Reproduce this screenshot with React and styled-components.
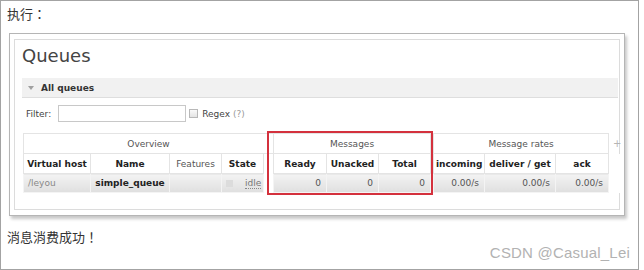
import styled, { createGlobalStyle } from 'styled-components';

const Global = createGlobalStyle`
  body {
    margin: 0;
    background: #fff;
  }
`

const Page = styled.div`
  position: relative;
  box-sizing: border-box;
  width: 639px;
  height: 270px;
  border: 1px solid #a3a3a3;
  padding: 3px 0 0 6px;
  font-family: "Noto Sans CJK TC", "Noto Sans CJK SC", sans-serif;
`

const Note = styled.p`
  margin: ${p => p.top || 0}px 0 0;
  font-size: 13px;
  line-height: 20px;
  color: #333;
`

const Shot = styled.div`
  box-sizing: border-box;
  width: 616px;
  margin: 9px 0 0 2px;
  padding: 5px 4px;
  border: 1px solid #b5b5b5;
  box-shadow: 2px 3px 3px rgba(0, 0, 0, 0.22);
  background: #fff;
`

const Inner = styled.div`
  position: relative;
  box-sizing: border-box;
  height: 171px;
  border: 1px solid #dcdcdc;
  padding: 5px 1px 0 7px;
  font-family: "DejaVu Sans", Verdana, sans-serif;
`

const Title = styled.h1`
  margin: 0;
  font-size: 18px;
  font-weight: normal;
  line-height: 22px;
  color: #444;
`

const Section = styled.div`
  display: flex;
  align-items: center;
  height: 19px;
  margin-top: 11px;
  padding-left: 6px;
  background: #f1f1f1;
  border-bottom: 1px solid #dedede;
  font-size: 9px;
  font-weight: bold;
  color: #333;
`

const Arrow = styled.span`
  width: 0;
  height: 0;
  margin-right: 7px;
  border-left: 3.5px solid transparent;
  border-right: 3.5px solid transparent;
  border-top: 4px solid #a0a0a0;
`

const FilterRow = styled.div`
  display: flex;
  align-items: center;
  height: 17px;
  margin-top: 7px;
  padding-left: 4px;
  font-size: 9px;
  color: #444;
`

const Input = styled.div`
  box-sizing: border-box;
  width: 128px;
  height: 17px;
  margin-left: 7px;
  border: 1px solid #c8c8c8;
  background: #fff;
`

const Check = styled.span`
  box-sizing: border-box;
  width: 9px;
  height: 9px;
  margin: 0 4px 0 3px;
  border: 1px solid #b8b8b8;
  background: linear-gradient(#fafafa, #e4e4e4);
`

const Help = styled.span`
  margin-left: 3px;
  color: #999;
`

const Table = styled.table`
  margin: 11px 0 0 1px;
  table-layout: fixed;
  width: 597px;
  border-collapse: collapse;
  font-size: 9px;
`

const Group = styled.th`
  height: 19px;
  padding: 0;
  border: 1px solid #e4e4e4;
  font-weight: normal;
  color: #555;
  background: #fff;
`

const Head = styled.th`
  height: 19px;
  padding: 0 2px;
  border: 1px solid #e4e4e4;
  font-weight: ${p => (p.plain ? 'normal' : 'bold')};
  color: ${p => (p.plain ? '#555' : '#222')};
  background: #fff;
  white-space: nowrap;
  overflow: hidden;
`

const Gap = styled.td`
  padding: 0;
  border: none;
  background: #fff;
`

const Plus = styled.th`
  padding: 0 0 0 4px;
  border: none;
  font-weight: normal;
  font-size: 10px;
  color: #b5b5b5;
  text-align: left;
`

const Cell = styled.td`
  height: 18px;
  padding: 0 ${p => (p.tight ? 0 : 5)}px 0 ${p => (p.tight ? 0 : 4)}px;
  border: 1px solid #f4f4f4;
  background: linear-gradient(#f3f3f3, #dfdfdf);
  text-align: ${p => p.align || 'left'};
  font-weight: ${p => (p.bold ? 'bold' : 'normal')};
  color: ${p => p.color || '#555'};
  white-space: nowrap;
  overflow: hidden;
`

const StateDot = styled.span`
  display: inline-block;
  width: 7px;
  height: 7px;
  margin-right: 12px;
  vertical-align: -1px;
  background: #dcdcdc;
`

const Idle = styled.span`
  color: #777;
  border-bottom: 1px dotted #888;
`

const Highlight = styled.div`
  position: absolute;
  left: 252px;
  top: 91px;
  width: 166px;
  height: 64px;
  box-sizing: border-box;
  border: 2px solid #d4313d;
  pointer-events: none;
`

const Watermark = styled.span`
  position: absolute;
  right: 8px;
  bottom: 8px;
  font-family: "Liberation Sans", Arial, sans-serif;
  font-size: 15px;
  letter-spacing: 0.2px;
  color: #b2b2b2;
`

const widths = [67, 79, 52, 42, 10, 53, 52, 52, 3, 51, 71, 53, 12];

export default function App() {
  return <>
    <Global />
    <Page>
      <Note>执行：</Note>
      <Shot>
        <Inner>
          <Title>Queues</Title>
          <Section><Arrow />All queues</Section>
          <FilterRow>
            Filter:
            <Input />
            <Check />
            Regex<Help>(?)</Help>
          </FilterRow>
          <Table>
            <colgroup>
              {widths.map((w, i) => <col key={i} style={{ width: w }} />)}
            </colgroup>
            <thead>
              <tr>
                <Group colSpan={5}>Overview</Group>
                <Group colSpan={3}>Messages</Group>
                <Gap />
                <Group colSpan={3}>Message rates</Group>
                <Plus>+</Plus>
              </tr>
              <tr>
                <Head>Virtual host</Head>
                <Head>Name</Head>
                <Head plain>Features</Head>
                <Head>State</Head>
                <Gap />
                <Head>Ready</Head>
                <Head>Unacked</Head>
                <Head>Total</Head>
                <Gap />
                <Head>incoming</Head>
                <Head>deliver / get</Head>
                <Head>ack</Head>
                <Gap />
              </tr>
            </thead>
            <tbody>
              <tr>
                <Cell color="#888">/leyou</Cell>
                <Cell bold tight color="#222" align="center">simple_queue</Cell>
                <Cell />
                <Cell><StateDot /><Idle>idle</Idle></Cell>
                <Gap />
                <Cell align="right">0</Cell>
                <Cell align="right">0</Cell>
                <Cell align="right">0</Cell>
                <Gap />
                <Cell align="right">0.00/s</Cell>
                <Cell align="right">0.00/s</Cell>
                <Cell align="right">0.00/s</Cell>
                <Gap />
              </tr>
            </tbody>
          </Table>
          <Highlight />
        </Inner>
      </Shot>
      <Note top={11}>消息消费成功！</Note>
      <Watermark>CSDN @Casual_Lei</Watermark>
    </Page>
  </>
}
